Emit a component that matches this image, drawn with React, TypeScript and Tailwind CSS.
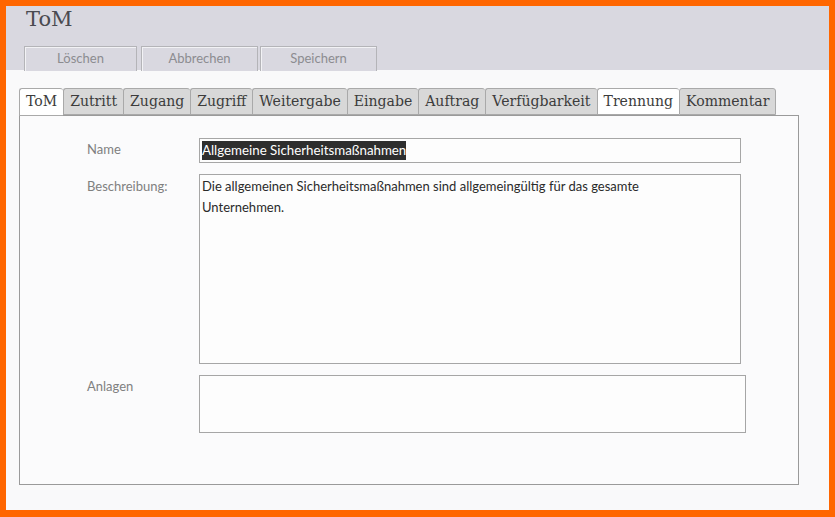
import React from "react";

const tabs = [
  { label: "ToM", active: true },
  { label: "Zutritt" },
  { label: "Zugang" },
  { label: "Zugriff" },
  { label: "Weitergabe" },
  { label: "Eingabe" },
  { label: "Auftrag" },
  { label: "Verfügbarkeit" },
  { label: "Trennung", active: true },
  { label: "Kommentar" },
];

const buttons = [
  { label: "Löschen", cls: "w-[113px]" },
  { label: "Abbrechen", cls: "w-[117px] ml-[4px]" },
  { label: "Speichern", cls: "w-[117px] ml-[2px]" },
];

export default function App() {
  return (
    <div className="w-[835px] h-[517px] bg-[#ff6600] pt-[6px] pl-[6px] pr-[6px] pb-[7px] font-['Lato',sans-serif]">
      <div className="h-full w-full bg-[#f9f9fa] flex flex-col">
        {/* Header */}
        <div className="bg-[#d9d8e0] h-[64px] pl-[18px] flex flex-col">
          <h1 className="font-['DejaVu_Serif',serif] text-[21px] leading-none text-[#4a4a50] pl-[2px] pt-[3px]">
            ToM
          </h1>
          <div className="flex mt-[16px]">
            {buttons.map((b) => (
              <button
                key={b.label}
                className={`${b.cls} h-[25px] border border-[#b4b4b8] border-b-0 bg-[#d9d8e0] text-[13px] text-[#8c8c90] shadow-[inset_1px_1px_0_#f2f2f5]`}
              >
                {b.label}
              </button>
            ))}
          </div>
        </div>

        {/* Tabs */}
        <div className="pl-[13px] pt-[18px] pr-[30px]">
          <div className="flex">
            {tabs.map((t) => (
              <div
                key={t.label}
                className={`h-[27px] px-[6px] flex items-center border border-[#a9a9a9] border-r-0 last:border-r rounded-t-[3px] font-['DejaVu_Serif',serif] text-[14.05px] text-[#3c3c3c] ${
                  t.active ? "bg-white" : "bg-[#d8d8d8]"
                } ${t.label === "ToM" ? "h-[28px] -mb-px relative" : ""}`}
              >
                {t.label}
              </div>
            ))}
          </div>
          <div className="h-[370px] border border-[#9a9a9a] bg-[#fbfbfc] pt-[22px] pl-[67px]">
            <div className="flex">
              <span className="w-[112px] text-[13px] text-[#808080] pt-[2px]">Name</span>
              <div className="w-[542px] h-[25px] border border-[#a6a6a6] bg-[#fdfdfd] flex items-center px-[2px]">
                <span className="bg-[#2e2e2e] text-white text-[13.3px] leading-[19px]">
                  Allgemeine Sicherheitsmaßnahmen
                </span>
              </div>
            </div>
            <div className="flex mt-[11px]">
              <span className="w-[112px] text-[13px] text-[#808080] pt-[3px]">Beschreibung:</span>
              <div className="w-[542px] h-[190px] border border-[#a6a6a6] bg-[#fdfdfd] px-[2px] pt-[1px] text-[13px] leading-[21px] text-[#2a2a2a]">
                Die allgemeinen Sicherheitsmaßnahmen sind allgemeingültig für das gesamte
                <br />
                Unternehmen.
              </div>
            </div>
            <div className="flex mt-[11px]">
              <span className="w-[112px] text-[13px] text-[#808080] pt-[2px]">Anlagen</span>
              <div className="w-[547px] h-[58px] border border-[#a6a6a6] bg-[#fdfdfd]" />
            </div>
          </div>
        </div>
      </div>
    </div>
  );
}
